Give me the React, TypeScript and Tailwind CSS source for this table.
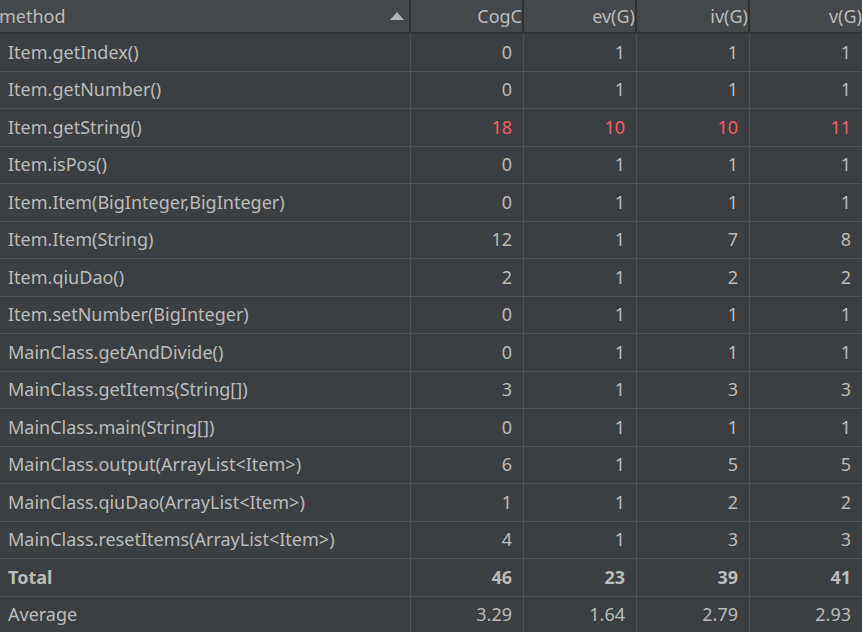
const rows: [string, string, string, string, string][] = [
  ["Item.getIndex()", "0", "1", "1", "1"],
  ["Item.getNumber()", "0", "1", "1", "1"],
  ["Item.getString()", "18", "10", "10", "11"],
  ["Item.isPos()", "0", "1", "1", "1"],
  ["Item.Item(BigInteger,BigInteger)", "0", "1", "1", "1"],
  ["Item.Item(String)", "12", "1", "7", "8"],
  ["Item.qiuDao()", "2", "1", "2", "2"],
  ["Item.setNumber(BigInteger)", "0", "1", "1", "1"],
  ["MainClass.getAndDivide()", "0", "1", "1", "1"],
  ["MainClass.getItems(String[])", "3", "1", "3", "3"],
  ["MainClass.main(String[])", "0", "1", "1", "1"],
  ["MainClass.output(ArrayList<Item>)", "6", "1", "5", "5"],
  ["MainClass.qiuDao(ArrayList<Item>)", "1", "1", "2", "2"],
  ["MainClass.resetItems(ArrayList<Item>)", "4", "1", "3", "3"],
];

const cols = ["w-[113px]", "w-[113px]", "w-[113px]", "flex-1"];

const Row = ({ cells, hot, bold }: { cells: string[]; hot?: boolean; bold?: boolean }) => (
  <div className={`flex h-[37.5px] border-b border-[#4f5255] ${bold ? "font-bold" : ""}`}>
    <div className="w-[411px] shrink-0 flex items-center pl-2 border-r border-[#4f5255]">{cells[0]}</div>
    {cells.slice(1).map((c, i) => (
      <div
        key={i}
        className={`${cols[i]} shrink-0 flex items-center justify-end pr-[11px] ${i < 3 ? "border-r border-[#4f5255]" : ""} ${hot ? "text-[#f55d5d]" : ""}`}
      >
        {c}
      </div>
    ))}
  </div>
);

export default function App() {
  return (
    <div
      className="w-[862px] h-[632px] overflow-hidden bg-[#3c3f41] text-[#bbbbbb] text-[18px]"
      style={{ fontFamily: '"Noto Sans", "Open Sans", sans-serif' }}
    >
      {/* header */}
      <div className="flex h-[34px] bg-[#45484a] border-b-2 border-[#323436]">
        <div className="w-[411px] shrink-0 flex items-center justify-between border-r-2 border-[#2e3032] pr-[5px] overflow-hidden">
          <span className="-ml-[1px]">method</span>
          <svg width="14" height="9" viewBox="0 0 14 9">
            <polygon points="7,0 14,8 0,8" fill="#b5b5b5" />
          </svg>
        </div>
        {["CogC", "ev(G)", "iv(G)", "v(G)"].map((h, i) => (
          <div
            key={h}
            className={`${cols[i]} shrink-0 flex items-center justify-end overflow-hidden ${i < 3 ? "border-r-2 border-[#2e3032]" : ""}`}
          >
            {h}
          </div>
        ))}
      </div>

      {rows.map((r) => (
        <Row key={r[0]} cells={r} hot={r[0] === "Item.getString()"} />
      ))}
      <Row cells={["Total", "46", "23", "39", "41"]} bold />
      <Row cells={["Average", "3.29", "1.64", "2.79", "2.93"]} />
    </div>
  );
}
